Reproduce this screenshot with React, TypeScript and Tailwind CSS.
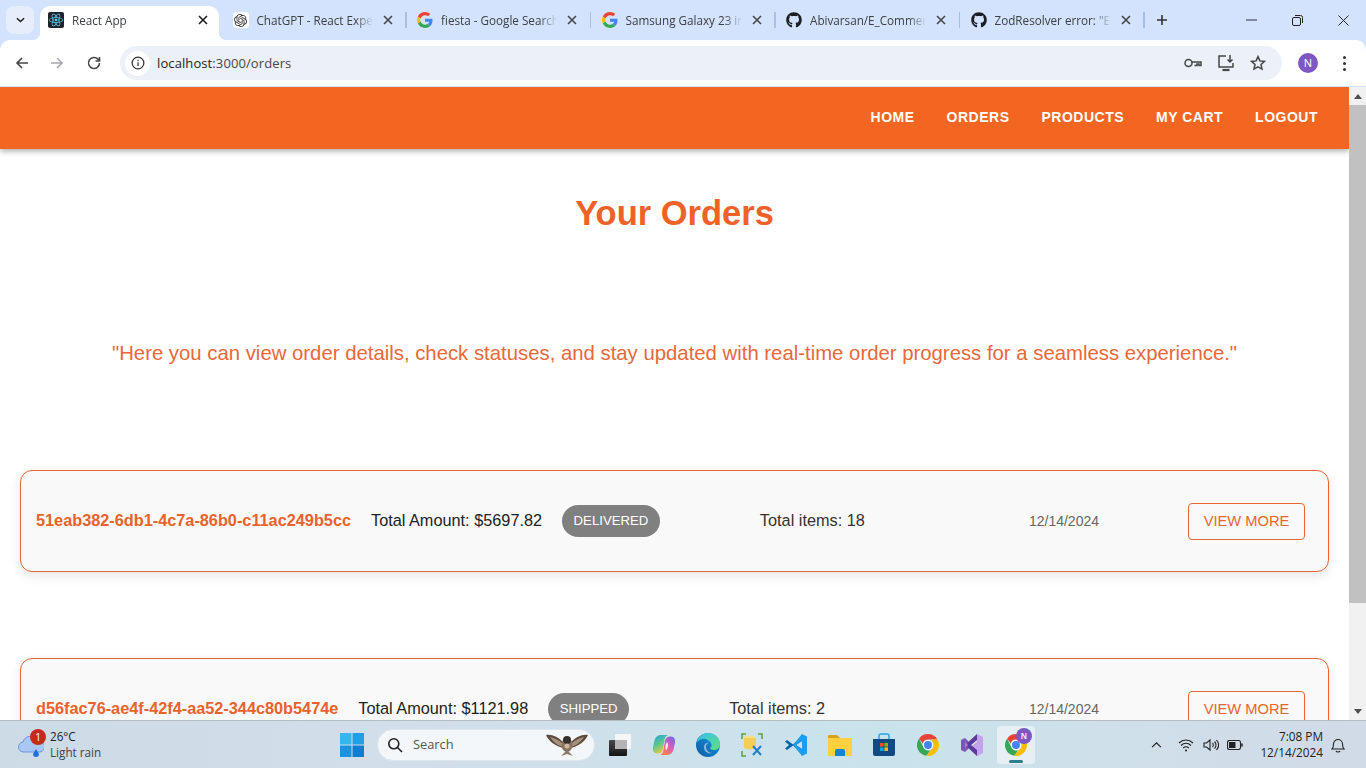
import React from "react";
import { SiOpenai, SiReact } from "react-icons/si";
import { FaGithub } from "react-icons/fa";

const GoogleG = () => (
  <svg viewBox="0 0 48 48" className="w-4 h-4">
    <path fill="#EA4335" d="M24 9.5c3.5 0 6.700 1.200 9.200 3.600l6.900-6.900C35.900 2.400 30.500 0 24 0 14.600 0 6.500 5.400 2.600 13.200l8 6.200C12.500 13.600 17.800 9.500 24 9.500z" />
    <path fill="#4285F4" d="M46.500 24.500c0-1.600-.1-3.100-.4-4.500H24v9h12.700c-.6 3-2.200 5.400-4.700 7.100l7.700 6c4.500-4.200 6.800-10.300 6.800-17.600z" />
    <path fill="#FBBC05" d="M10.500 28.600c-.5-1.400-.8-3-.8-4.600s.3-3.200.8-4.600l-8-6.200C.9 16.500 0 20.100 0 24s.9 7.500 2.600 10.800l7.900-6.200z" />
    <path fill="#34A853" d="M24 48c6.500 0 11.900-2.100 15.900-5.900l-7.700-6c-2.200 1.500-4.900 2.300-8.200 2.300-6.200 0-11.500-4.200-13.400-9.800l-8 6.200C6.500 42.600 14.600 48 24 48z" />
  </svg>
);

const Fav = ({ kind }: { kind: string }) => {
  if (kind === "react")
    return (
      <span className="w-4 h-4 rounded-[2px] bg-[#20232a] flex items-center justify-center">
        <SiReact className="w-[14px] h-[14px] text-[#61dafb]" />
      </span>
    );
  if (kind === "gpt")
    return (
      <span className="w-4 h-4 rounded-[3px] bg-white flex items-center justify-center">
        <SiOpenai className="w-[13px] h-[13px] text-[#333]" />
      </span>
    );
  if (kind === "g") return <GoogleG />;
  return <FaGithub className="w-4 h-4 text-[#1b1f23]" />;
};

const X = ({ c = "#1f1f1f" }: { c?: string }) => (
  <svg viewBox="0 0 10 10" className="w-[10px] h-[10px]" fill="none" stroke={c} strokeWidth="1.6">
    <path d="M1 1l8 8M9 1l-8 8" />
  </svg>
);

const tabs = [
  { k: "react", t: "React App", active: true },
  { k: "gpt", t: "ChatGPT - React Expe" },
  { k: "g", t: "fiesta - Google Search" },
  { k: "g", t: "Samsung Galaxy 23 in" },
  { k: "gh", t: "Abivarsan/E_Commer" },
  { k: "gh", t: 'ZodResolver error: "E' },
];

const Tab = ({ k, t, active }: { k: string; t: string; active?: boolean }) => (
  <div className="relative w-[184.5px] h-[34px] flex items-start shrink-0 pl-[10.5px] pt-[6px]">
    {active && (
      <>
        <div className="absolute left-[2.5px] right-[3px] top-0 bottom-0 bg-white rounded-t-[10px]" />
        <div className="absolute left-[-5.5px] bottom-0 w-2 h-2 bg-[radial-gradient(circle_at_0_0,transparent_8px,#ffffff_8.5px)]" />
        <div className="absolute right-[-5px] bottom-0 w-2 h-2 bg-[radial-gradient(circle_at_100%_0,transparent_8px,#ffffff_8.5px)]" />
      </>
    )}
    <div className="relative flex items-center w-full">
      <span className="w-4 h-4 shrink-0 flex items-center justify-center">
        <Fav kind={k} />
      </span>
      <span className="ml-[8px] w-[120px] whitespace-nowrap text-[11.7px] leading-4 text-[#3c4043] [mask-image:linear-gradient(90deg,#000_82%,transparent_97%)]">
        {t}
      </span>
      <span className="ml-[6px] flex items-center">
        <X c={active ? "#1f1f1f" : "#444746"} />
      </span>
    </div>
    {!active && <div className="absolute right-0 top-[6px] w-[1.5px] h-[16px] bg-[#a8c0e4]" />}
  </div>
);

const TabBar = () => (
  <div className="h-10 bg-[#d3e3fd] flex items-start pt-[6px] shrink-0">
    <div className="ml-[6px] w-[28px] h-[28px] rounded-lg bg-[#e6eefc] flex items-center justify-center shrink-0">
      <svg viewBox="0 0 10 6" className="w-[9px] h-[6px]" fill="none" stroke="#1f1f1f" strokeWidth="1.7">
        <path d="M1 1l4 3.700L9 1" />
      </svg>
    </div>
    <div className="ml-[3.5px] flex">
      {tabs.map((x, i) => (
        <Tab key={i} k={x.k} t={x.t} active={x.active} />
      ))}
    </div>
    <div className="ml-[10px] mt-[7px] w-[14px] h-[14px] shrink-0">
      <svg viewBox="0 0 14 14" className="w-full h-full" stroke="#333" strokeWidth="1.6">
        <path d="M7 2v10M2 7h10" />
      </svg>
    </div>
    <div className="ml-auto flex items-center h-7 shrink-0">
      <div className="w-[46px] flex justify-center">
        <svg viewBox="0 0 12 2" className="w-[11px] h-[2px]"><path d="M0 1h12" stroke="#222" /></svg>
      </div>
      <div className="w-[46px] flex justify-center">
        <svg viewBox="0 0 11 11" className="w-[11px] h-[11px]" fill="none" stroke="#222">
          <rect x="0.500" y="2.500" width="8" height="8" rx="1.500" />
          <path d="M3 .5h5.500a2 2 0 012 2V8" />
        </svg>
      </div>
      <div className="w-[46px] flex justify-center">
        <svg viewBox="0 0 11 11" className="w-[11px] h-[11px]" fill="none" stroke="#222"><path d="M.5.5l10 10M10.500.5l-10 10" /></svg>
      </div>
    </div>
  </div>
);

const Toolbar = () => (
  <div className="h-[47px] bg-[#d3e3fd] shrink-0">
    <div className="h-[46px] bg-white rounded-tr-[10px] rounded-tl-[10px] flex items-center">
      <div className="w-[120px] flex items-center shrink-0">
        <svg viewBox="0 0 16 16" className="ml-[14px] w-4 h-4" fill="none" stroke="#444746" strokeWidth="1.600">
          <path d="M14 8H3M8 3L3 8l5 5" />
        </svg>
        <svg viewBox="0 0 16 16" className="ml-[19px] w-4 h-4" fill="none" stroke="#a5a8ac" strokeWidth="1.600">
          <path d="M2 8h11M8 3l5 5-5 5" />
        </svg>
        <svg viewBox="0 0 16 16" className="ml-[21px] w-4 h-4" fill="none" stroke="#444746" strokeWidth="1.600">
          <path d="M13.500 8a5.500 5.500 0 11-1.600-3.900L13.500 6" />
          <path d="M13.500 2v4h-4" />
        </svg>
      </div>
      <div className="w-[1162px] h-[34px] rounded-[17px] bg-[#ebf0f9] flex items-center shrink-0 pl-[5px]">
        <div className="w-[25px] h-[25px] rounded-full bg-white flex items-center justify-center">
          <svg viewBox="0 0 16 16" className="w-[14px] h-[14px]" fill="none" stroke="#303134" strokeWidth="1.400">
            <circle cx="8" cy="8" r="6.700" />
            <path d="M8 7v4.500M8 4.200v1.500" />
          </svg>
        </div>
        <span className="ml-[7px] text-[13px] leading-4 text-[#1f1f1f] tracking-[0.1px]">
          localhost<span className="text-[#474747]">:3000/orders</span>
        </span>
        <div className="ml-auto flex items-center pr-[16px] gap-[15px]">
          <svg viewBox="0 0 18 12" className="w-[18px] h-[12px]" fill="none" stroke="#444746" strokeWidth="1.500">
            <circle cx="4.500" cy="6" r="3.500" />
            <path d="M8 5h9v3.500h-2V7h-2v1.500h-2.500" />
          </svg>
          <svg viewBox="0 0 18 18" className="w-[18px] h-[18px]" fill="none" stroke="#444746" strokeWidth="1.500">
            <path d="M9 2H2v11h14V9" />
            <path d="M5.500 16h7" strokeWidth="2.200" />
            <path d="M13 1v7M10.500 5.500L13 8l2.500-2.500" />
          </svg>
          <svg viewBox="0 0 16 16" className="w-4 h-4" fill="none" stroke="#444746" strokeWidth="1.500">
            <path d="M8 1.600l1.900 4.300 4.600.5-3.500 3.100 1 4.600L8 11.800l-4 2.300 1-4.600-3.500-3.100 4.600-.5z" />
          </svg>
        </div>
      </div>
      <div className="ml-[16px] w-[20px] h-[20px] rounded-full bg-[#7e57c2] text-white text-[11px] leading-5 text-center font-['Open_Sans',sans-serif]">
        N
      </div>
      <div className="ml-[25px] flex flex-col gap-[3px]">
        <span className="w-[3px] h-[3px] rounded-full bg-[#333]" />
        <span className="w-[3px] h-[3px] rounded-full bg-[#333]" />
        <span className="w-[3px] h-[3px] rounded-full bg-[#333]" />
      </div>
    </div>
  </div>
);

const Card = ({ id, amount, status, items }: { id: string; amount: string; status: string; items: number }) => (
  <div className="mx-5 h-[102px] shrink-0 rounded-[12px] border border-[#e8662e] bg-[#f9f9f9] shadow-[0_4px_12px_rgba(0,0,0,0.1)] flex items-center pl-[15px] pr-[23px]">
    <span className="mt-[-2px] text-[16.3px] font-bold text-[#e8622c] whitespace-nowrap">{id}</span>
    <span className="ml-5 mt-[-2px] text-[16.3px] text-[#222] whitespace-nowrap">Total Amount: ${amount}</span>
    <span className="ml-5 h-8 px-[11.5px] rounded-2xl bg-[#808080] text-white text-[13.2px] leading-8 whitespace-nowrap">{status}</span>
    <span className="ml-[100px] mt-[-2px] text-[16.3px] text-[#333] whitespace-nowrap">Total items: {items}</span>
    <span className="ml-auto text-[14px] text-[#666] whitespace-nowrap">12/14/2024</span>
    <button className="ml-[89px] w-[117px] h-[37px] rounded border border-[#e8662e] text-[#e8662e] text-[14.7px]">VIEW MORE</button>
  </div>
);

const Nav = () => (
  <div className="h-[62px] shrink-0 bg-[#f36621] shadow-[0_2px_6px_rgba(0,0,0,0.35)] flex items-center justify-end gap-8 pr-[31px] pb-[2px] relative">
    {["HOME", "ORDERS", "PRODUCTS", "MY CART", "LOGOUT"].map((n) => (
      <span key={n} className="text-white font-bold text-[14px] tracking-[0.5px]">
        {n}
      </span>
    ))}
  </div>
);

const Scrollbar = () => (
  <div className="w-[17px] shrink-0 bg-[#f1f1f1] flex flex-col items-center">
    <div className="h-[18px] flex items-center justify-center">
      <svg viewBox="0 0 8 5" className="w-2 h-[5px]"><path d="M4 0l4 5H0z" fill="#505050" /></svg>
    </div>
    <div className="w-full h-[498px] bg-[#c1c1c1]" />
    <div className="mt-auto h-[17px] flex items-center justify-center">
      <svg viewBox="0 0 8 5" className="w-2 h-[5px]"><path d="M4 5l4-5H0z" fill="#505050" /></svg>
    </div>
  </div>
);

const ChromeIcon = ({ s = 24 }: { s?: number }) => (
  <svg viewBox="0 0 48 48" width={s} height={s}>
    <path fill="#EA4335" d="M24 2a22 22 0 0119 11H24a11 11 0 00-10.600 8L6.300 10.800A22 22 0 0124 2z" />
    <path fill="#34A853" d="M6.300 10.800L15.500 30a11 11 0 0013.500 4.300L20.600 45.700A22 22 0 016.300 10.800z" />
    <path fill="#FBBC05" d="M43 13a22 22 0 01-22.400 32.700L29 34.300A11 11 0 0033 18l-1-5z" />
    <circle cx="24" cy="24" r="10" fill="#fff" />
    <circle cx="24" cy="24" r="8" fill="#4285F4" />
  </svg>
);

const TaskIcons = () => (
  <>
    <div className="w-[44px] flex justify-center">
      <svg viewBox="0 0 24 24" className="w-6 h-6">
        <defs>
          <linearGradient id="tv1" x1="0" y1="0" x2="0" y2="1">
            <stop offset="0" stopColor="#4a4a4a" />
            <stop offset="1" stopColor="#141414" />
          </linearGradient>
        </defs>
        <rect x="1" y="7" width="18" height="16" rx="1" fill="url(#tv1)" />
        <rect x="7" y="1" width="16" height="15" rx="1" fill="#f6f6f6" />
        <rect x="7" y="7" width="12" height="9" fill="#b4b4b4" />
      </svg>
    </div>
    <div className="w-[44px] flex justify-center">
      <svg viewBox="0 0 24 24" className="w-6 h-6">
        <defs>
          <linearGradient id="cp1" x1="0" y1="0" x2="0.500" y2="1">
            <stop offset="0" stopColor="#1f9fe0" />
            <stop offset="0.550" stopColor="#5cc98a" />
            <stop offset="1" stopColor="#f5c73b" />
          </linearGradient>
          <linearGradient id="cp2" x1="1" y1="0" x2="0.300" y2="1">
            <stop offset="0" stopColor="#5a6fe8" />
            <stop offset="0.500" stopColor="#d65bc0" />
            <stop offset="1" stopColor="#f7854a" />
          </linearGradient>
        </defs>
        <path fill="url(#cp1)" d="M9 2h7c-2 .5-3 2.500-3.500 5L11 16c-.6 3-2.500 4.500-5 4.500H5c-3 0-4.500-3-4-6l1.500-7C3.200 4.500 5.500 2 9 2z" />
        <path fill="url(#cp2)" d="M15 22H8c2-.5 3-2.500 3.500-5L13 8c.6-3 2.500-4.500 5-4.500h1c3 0 4.500 3 4 6l-1.500 7C20.800 19.500 18.500 22 15 22z" />
        <path fill="#fff" opacity="0.850" d="M15 9c1.500 1.500 1.500 5-1 8.500-1-2-1-5.500 1-8.500z" />
      </svg>
    </div>
    <div className="w-[44px] flex justify-center">
      <svg viewBox="0 0 24 24" className="w-6 h-6">
        <defs>
          <linearGradient id="ed1" x1="0" y1="1" x2="1" y2="0">
            <stop offset="0" stopColor="#0c59a4" />
            <stop offset="1" stopColor="#1b9de2" />
          </linearGradient>
          <linearGradient id="ed2" x1="0" y1="0" x2="1" y2="1">
            <stop offset="0" stopColor="#35c1f1" />
            <stop offset="1" stopColor="#5fdf7a" />
          </linearGradient>
        </defs>
        <circle cx="12" cy="12" r="12" fill="url(#ed1)" />
        <path fill="url(#ed2)" d="M1 9C2 4 7 0 12 0c7 0 12 5 12 11 0 4-3 6-6 6-2 0-4-1-4-2 2-1 2-3 1-5C13 7 9 5 6 6 4 6.500 2 8 1 9z" />
        <path fill="#fff" d="M16 20c-4 1-8-1-8-6 0-3 3-5 5-4-2 0-3 2-3 4 0 3 3 6 6 6z" opacity="0.500" />
      </svg>
    </div>
    <div className="w-[44px] flex justify-center">
      <svg viewBox="0 0 24 24" className="w-6 h-6" fill="none">
        <path d="M2 6V1h4M18 1h4v5M2 18v5h4" stroke="#5aa045" strokeWidth="1.500" />
        <ellipse cx="10" cy="5" rx="6" ry="2.500" fill="#f7e08a" />
        <path d="M4 5h12v9c0 1.500-3 2.500-6 2.500S4 15.500 4 14z" fill="#f3cf5a" />
        <path d="M13 22l8-9M21 22l-8-9" stroke="#1f7fc4" strokeWidth="2" />
      </svg>
    </div>
    <div className="w-[44px] flex justify-center">
      <svg viewBox="0 0 24 24" className="w-6 h-6">
        <path fill="#0065a9" d="M1 8.500L3 7l6 4.500L18 3v5l-6 4 6 4v5l-9-8.500L3 17l-2-1.500L5 12z" />
        <path fill="#1f9cf0" d="M18 1l5 2.500v17L18 23l-9-11zM18 7.500L12 12l6 4.500z" />
      </svg>
    </div>
    <div className="w-[44px] flex justify-center">
      <svg viewBox="0 0 24 24" className="w-6 h-6">
        <path fill="#d8a21c" d="M0 3a1 1 0 011-1h8l3 3h-12z" />
        <rect x="0" y="5" width="24" height="18" rx="1" fill="#fdd03f" />
        <path fill="#1583d4" d="M7 23v-5a2 2 0 012-2h6a2 2 0 012 2v5z" />
      </svg>
    </div>
    <div className="w-[44px] flex justify-center">
      <svg viewBox="0 0 24 24" className="w-6 h-6">
        <path d="M7 7V3a2 2 0 012-2h6a2 2 0 012 2v4" fill="none" stroke="#29a3e3" strokeWidth="1.500" />
        <path d="M1 6h22v15a2 2 0 01-2 2H3a2 2 0 01-2-2z" fill="#114a82" />
        <rect x="8" y="10" width="3.600" height="3.600" fill="#f25022" />
        <rect x="12.400" y="10" width="3.600" height="3.600" fill="#7fba00" />
        <rect x="8" y="14.400" width="3.600" height="3.600" fill="#00a4ef" />
        <rect x="12.400" y="14.400" width="3.600" height="3.600" fill="#ffb900" />
      </svg>
    </div>
    <div className="w-[44px] flex justify-center">
      <ChromeIcon />
    </div>
    <div className="w-[44px] flex justify-center">
      <svg viewBox="0 0 24 24" className="w-6 h-6">
        <path fill="#7c55b8" d="M1 7l4-2 5 5v4l-5 5-4-2z" />
        <path fill="#c5a3ea" d="M17 1l6 3v16l-6 3-8-8 8-6v-3z" />
        <path fill="#5c3a9b" d="M17 1L5 12l12 11 0-6-6-5 6-5z" />
        <path fill="#a87fdc" d="M5 9l3 3-3 3z" />
      </svg>
    </div>
    <div className="w-[44px] flex justify-center">
      <div className="relative w-[38px] h-[38px] rounded-[4px] bg-[#e6eff4] flex items-center justify-center">
        <ChromeIcon s={24} />
        <span className="absolute right-[3px] top-[2px] w-4 h-4 rounded-full bg-[#7e57c2] text-white text-[8px] leading-4 text-center font-['Open_Sans',sans-serif] font-semibold">
          N
        </span>
        <span className="absolute bottom-[1px] left-[12px] w-[14px] h-[3px] rounded-full bg-[#2b7f8c]" />
      </div>
    </div>
  </>
);

const Owl = () => (
  <svg viewBox="0 0 42 24" className="w-[42px] h-[24px]">
    <path fill="#5d4a3e" d="M0 2c6-1 12 2 17 7l1 6C11 14 3 9 0 2z" />
    <path fill="#5d4a3e" d="M42 2c-6-1-12 2-17 7l-1 6c7-1 15-6 18-13z" />
    <path fill="#a5907c" d="M4 4c5 1 9 3 13 7l1 3C12 13 7 9 4 4zM38 4c-5 1-9 3-13 7l-1 3c6-1 11-5 14-10z" />
    <ellipse cx="21" cy="12" rx="5.500" ry="7" fill="#8b7561" />
    <circle cx="21" cy="7" r="4" fill="#34312d" />
    <path fill="#8d7a68" d="M15 23l6-6 6 6-6-2z" />
    <circle cx="21" cy="13" r="2.500" fill="#c9b9a5" />
  </svg>
);

const Taskbar = () => (
  <div className="h-12 shrink-0 border-t border-[#b4bcc4] bg-[linear-gradient(90deg,#cddbe7_0%,#d2deea_30%,#c9e3ec_65%,#cfe0ea_80%,#d1dae7_100%)] flex items-center font-['Open_Sans',sans-serif] text-[#222]">
    <div className="w-[339px] shrink-0 flex items-center pl-[16px]">
      <div className="relative w-[28px] h-[28px]">
        <svg viewBox="0 0 28 28" className="w-[28px] h-[28px]">
          <path fill="#aac6f2" stroke="#6d94de" d="M8 21a5 5 0 01-1-10 8 8 0 0115-1 5.500 5.500 0 012 11z" />
          <path fill="#1f6fe0" d="M20 18l3 5a3 3 0 11-6 0z" />
        </svg>
        <span className="absolute left-[14px] top-[-2px] w-4 h-4 rounded-full bg-[#c42b1c] text-white text-[10px] leading-4 text-center">1</span>
      </div>
      <div className="ml-[6px] mt-[-2px] text-[11.7px] leading-[16px]">
        <div>26°C</div>
        <div className="text-[#444]">Light rain</div>
      </div>
    </div>
    <div className="w-[26px] shrink-0 flex justify-center">
      <svg viewBox="0 0 24 24" className="w-[24px] h-[24px]">
        <rect x="0" y="0" width="11.500" height="11.500" fill="#35b6ef" />
        <rect x="12.500" y="0" width="11.500" height="11.500" fill="#1f9fe6" />
        <rect x="0" y="12.500" width="11.500" height="11.500" fill="#1d93e0" />
        <rect x="12.500" y="12.500" width="11.500" height="11.500" fill="#0f7dd0" />
      </svg>
    </div>
    <div className="ml-[12px] w-[218px] h-[32px] rounded-2xl bg-[#f3f7fa] border border-[#dde6ec] flex items-center pl-[9px] pr-[6px] shrink-0">
      <svg viewBox="0 0 16 16" className="w-4 h-4" fill="none" stroke="#222" strokeWidth="1.600">
        <circle cx="6.800" cy="6.800" r="5" />
        <path d="M10.500 10.500L15 15" />
      </svg>
      <span className="ml-[10px] text-[12.8px] text-[#555]">Search</span>
      <span className="ml-auto">
        <Owl />
      </span>
    </div>
    <div className="ml-[3px] flex items-center shrink-0">
      <TaskIcons />
    </div>
    <div className="ml-auto flex items-center shrink-0 pr-[21px]">
      <svg viewBox="0 0 12 8" className="w-[11px] h-[7px] mr-[16px]" fill="none" stroke="#222" strokeWidth="1.400">
        <path d="M1 7l5-5 5 5" />
      </svg>
      <svg viewBox="0 0 16 14" className="w-4 h-[14px] mr-[9px]" fill="none" stroke="#222" strokeWidth="1.100">
        <path d="M1 5c4-4 10-4 14 0M3 7.500c3-3 7-3 10 0M5.200 10c1.500-1.500 4-1.500 5.600 0" />
        <circle cx="8" cy="12.500" r="1" fill="#222" stroke="none" />
      </svg>
      <svg viewBox="0 0 16 14" className="w-4 h-[14px] mr-[8px]" fill="none" stroke="#222" strokeWidth="1.100">
        <path d="M1 5h2.500L7 2v10L3.500 9H1z" />
        <path d="M9.500 5c1 1 1 3 0 4M11.500 3.500c2 2 2 5 0 7M13.500 2c2.500 3 2.500 7 0 10" />
      </svg>
      <svg viewBox="0 0 16 10" className="w-4 h-[10px] mr-[17px]" fill="none" stroke="#222" strokeWidth="1.100">
        <rect x="0.500" y="0.500" width="13" height="9" rx="2" />
        <rect x="2" y="2" width="6.500" height="6" fill="#222" stroke="none" />
        <path d="M15 3.500v3" strokeWidth="1.500" />
      </svg>
      <div className="text-[11.8px] leading-[16px] text-right mt-[-1px]">
        <div>7:08 PM</div>
        <div>12/14/2024</div>
      </div>
      <svg viewBox="0 0 14 16" className="ml-[8px] w-[14px] h-[16px]" fill="none" stroke="#222" strokeWidth="1.100">
        <path d="M1 12c1-1 1.500-2 1.500-5a4.500 4.500 0 019 0c0 3 .5 4 1.500 5z" />
        <path d="M5 14c.5 1.300 3.500 1.300 4 0" />
      </svg>
    </div>
  </div>
);

export default function App() {
  return (
    <div className="w-[1366px] h-[768px] overflow-hidden flex flex-col bg-white font-['Open_Sans',sans-serif]">
      <TabBar />
      <Toolbar />
      <div className="flex-1 min-h-0 flex font-['Liberation_Sans',Arial,sans-serif]">
        <div className="flex-1 min-w-0 flex flex-col overflow-hidden">
          <Nav />
          <h1 className="mt-[44px] text-center text-[34.5px] leading-10 font-bold text-[#ee622a]">Your Orders</h1>
          <p className="mt-[106px] text-center text-[20.33px] leading-7 text-[#e8683a]">
            "Here you can view order details, check statuses, and stay updated with real-time order progress for a seamless experience."
          </p>
          <div className="mt-[103px] flex flex-col gap-[86px]">
            <Card id="51eab382-6db1-4c7a-86b0-c11ac249b5cc" amount="5697.82" status="DELIVERED" items={18} />
            <Card id="d56fac76-ae4f-42f4-aa52-344c80b5474e" amount="1121.98" status="SHIPPED" items={2} />
          </div>
        </div>
        <Scrollbar />
      </div>
      <Taskbar />
    </div>
  );
}
